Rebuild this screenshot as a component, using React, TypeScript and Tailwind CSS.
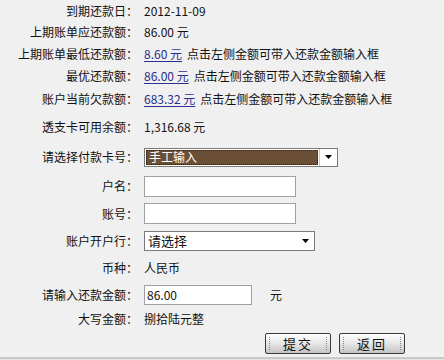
import React from "react";

const font = { fontFamily: '"Noto Sans CJK SC", "Liberation Sans", sans-serif' };

function Row({ label, h, children }: { label: string; h: string; children?: React.ReactNode }) {
  return (
    <div className={`flex items-center ${h}`}>
      <div className="w-[140px] shrink-0 text-right pr-[2px]">{label}：</div>
      <div className="flex items-center pl-[4px]">{children}</div>
    </div>
  );
}

function Link({ children }: { children: React.ReactNode }) {
  return <span className="text-[#2b2f8f] underline underline-offset-2">{children}</span>;
}

function Arrow() {
  return (
    <svg width="7" height="4" viewBox="0 0 7 4">
      <path d="M0 0 H7 L3.5 4 Z" fill="#000" />
    </svg>
  );
}

function Btn({ children }: { children: React.ReactNode }) {
  return (
    <button className="relative w-[66px] h-[21px] border border-[#3a3a3a] rounded-[2px] bg-gradient-to-b from-[#ffffff] via-[#e6e6e6] to-[#c4c4c4] text-[13px] tracking-[2px] flex items-center justify-center">
      <span className="absolute left-[3px] top-[3px] bottom-[3px] w-[1px] border-l border-dotted border-[#888]" />
      <span className="absolute right-[3px] top-[3px] bottom-[3px] w-[1px] border-r border-dotted border-[#888]" />
      {children}
    </button>
  );
}

export default function App() {
  return (
    <div style={font} className="w-[444px] h-[360px] bg-[#f0f0f0] text-[12px] text-[#111] leading-none flex flex-col overflow-hidden">
      <div className="flex flex-col">
        <Row label="到期还款日" h="h-[21px]">2012-11-09</Row>
        <Row label="上期账单应还款额" h="h-[22px]">86.00 元</Row>
        <Row label="上期账单最低还款额" h="h-[22px]">
          <Link>8.60 元</Link>
          <span className="ml-[5px]">点击左侧金额可带入还款金额输入框</span>
        </Row>
        <Row label="最优还款额" h="h-[21px]">
          <Link>86.00 元</Link>
          <span className="ml-[5px]">点击左侧金额可带入还款金额输入框</span>
        </Row>
        <Row label="账户当前欠款额" h="h-[26px]">
          <Link>683.32 元</Link>
          <span className="ml-[5px]">点击左侧金额可带入还款金额输入框</span>
        </Row>
        <Row label="透支卡可用余额" h="h-[30px]">1,316.68 元</Row>
        <Row label="请选择付款卡号" h="h-[30px]">
          <div className="w-[194px] h-[19px] border border-[#7a7a7a] bg-white flex items-stretch">
            <div className="flex-1 m-[1px] bg-[#6b4f36] border border-dotted border-[#222] text-white flex items-center pl-[2px]">
              手工输入
            </div>
            <div className="w-[18px] border-l border-[#c8c8c8] flex items-center justify-center">
              <Arrow />
            </div>
          </div>
        </Row>
        <Row label="户名" h="h-[28px]">
          <div className="w-[152px] h-[21px] border border-[#a0a0a0] bg-white" />
        </Row>
        <Row label="账号" h="h-[27px]">
          <div className="w-[152px] h-[21px] border border-[#a0a0a0] bg-white" />
        </Row>
        <Row label="账户开户行" h="h-[27px]">
          <div className="w-[171px] h-[20px] border border-[#7a7a7a] bg-white flex items-center justify-between pl-[3px] pr-[5px] text-[13px]">
            请选择
            <Arrow />
          </div>
        </Row>
        <Row label="币种" h="h-[28px]">人民币</Row>
        <Row label="请输入还款金额" h="h-[26px]">
          <div className="w-[108px] h-[20px] border border-[#a0a0a0] bg-white flex items-center pl-[2px]">86.00</div>
          <span className="ml-[18px]">元</span>
        </Row>
        <Row label="大写金额" h="h-[22px]">捌拾陆元整</Row>
      </div>
      <div className="flex justify-end gap-[8px] pr-[39px] pt-[3px] h-[27px]">
        <Btn>提交</Btn>
        <Btn>返回</Btn>
      </div>
      <div className="h-[2px] bg-[#c8c8c8]" />
      <div className="flex-1 bg-[#e4e4e4]" />
    </div>
  );
}
